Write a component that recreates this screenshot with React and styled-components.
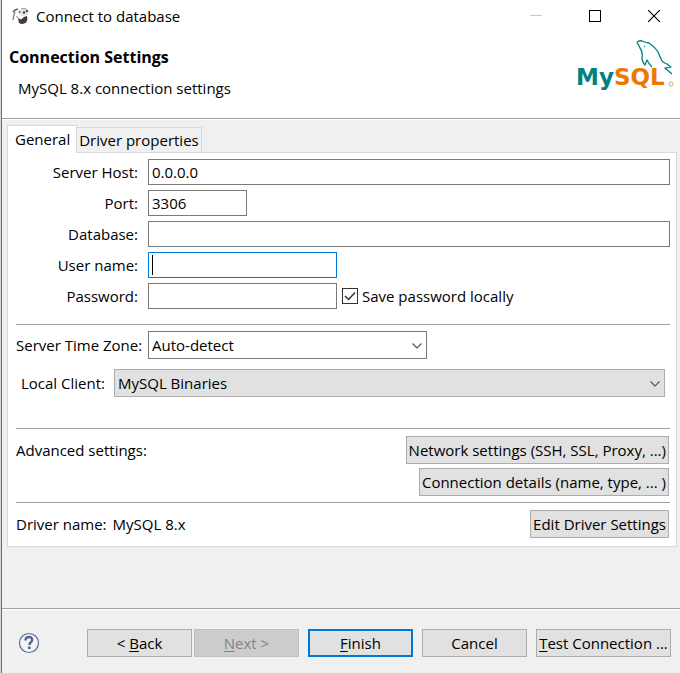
import React from "react";
import styled, { createGlobalStyle, css } from "styled-components";

const GlobalStyle = createGlobalStyle`
  *, *::before, *::after { box-sizing: border-box; }
  html, body { margin: 0; padding: 0; }
  body, button, input, select {
    font-family: "Open Sans", "Noto Sans", sans-serif;
    font-size: 15px;
    line-height: 20px;
    color: #000;
  }
`;

const Dialog = styled.main`
  display: flex;
  flex-direction: column;
  min-height: 100vh;
  background: #f0f0f0;
  border-left: 1px solid #6e6e6e;
  margin-left: 1px;
  box-shadow: -1px 0 0 #d4d6da;
`;

const Header = styled.header`
  background: #fff;
  border-bottom: 1px solid #a0a0a0;
  box-shadow: 0 1px 0 #fff;
`;

const TitleBar = styled.div`
  display: flex;
  align-items: center;
  height: 32px;
  padding-left: 10px;
`;

const TitleText = styled.span`
  flex: 1;
  padding-left: 7px;
`;

const WindowButton = styled.button`
  display: flex;
  align-items: center;
  justify-content: center;
  width: 59px;
  height: 32px;
  padding: 0;
  border: 0;
  background: none;
  color: ${(p) => (p.disabled ? "#c8c8c8" : "#000")};

  &:last-child {
    margin-right: -3px;
  }
`;

const Banner = styled.div`
  display: flex;
  justify-content: space-between;
  height: 86px;
  padding: 8px 4px 0 7px;
`;

const Headings = styled.div`
  display: flex;
  flex-direction: column;
  padding-top: 7px;
  gap: 11px;
`;

const Heading = styled.h1`
  margin: 0;
  font-size: 16px;
  line-height: 20px;
  font-weight: 700;
`;

const Subtitle = styled.p`
  margin: 0;
  padding-left: 9px;
`;

const Content = styled.div`
  flex: 1;
  padding: 6px 3px 0 5px;
`;

const Tabs = styled.div`
  display: flex;
  align-items: flex-end;
`;

const Tab = styled.button`
  z-index: 1;
  height: ${(p) => (p.$active ? 28 : 26)}px;
  margin-bottom: -1px;
  padding: ${(p) => (p.$active ? "0 6px 2px 7px" : "0 2px")};
  border: 1px solid #d9d9d9;
  border-left-width: ${(p) => (p.$active ? 1 : 0)}px;
  border-bottom-width: ${(p) => (p.$active ? 0 : 1)}px;
  background: ${(p) => (p.$active ? "#fff" : "#f0f0f0")};
`;

const Panel = styled.section`
  background: #fff;
  border: 1px solid #d9d9d9;
  padding: 6px 6px 8px 8px;
`;

const Fields = styled.div`
  display: flex;
  flex-direction: column;
  gap: 5px;
`;

const FieldRow = styled.div`
  display: flex;
  align-items: center;
`;

const FieldLabel = styled.label`
  flex: none;
  width: 122px;
  margin-right: 10px;
  text-align: right;
  white-space: nowrap;
`;

const InputBox = styled.div`
  position: relative;
  display: flex;
  ${(p) => (p.$width ? css`width: ${p.$width}px;` : css`flex: 1;`)}
`;

const TextInput = styled.input`
  width: 100%;
  height: 26px;
  padding: 0 3px;
  border: 1px solid ${(p) => (p.$focused ? "#0078d7" : "#7a7a7a")};
  border-radius: 0;
  background: #fff;
  outline: 0;
  caret-color: transparent;
`;

const Caret = styled.span`
  position: absolute;
  left: 4px;
  top: 3px;
  width: 1px;
  height: 20px;
  background: #000;
`;

const CheckLabel = styled.label`
  display: flex;
  align-items: center;
  gap: 4px;
  margin-left: 5px;
`;

const CheckBox = styled.span`
  position: relative;
  display: flex;

  input {
    appearance: none;
    width: 16px;
    height: 16px;
    margin: 0;
    border: 1px solid #333;
    background: #fff;
  }

  svg {
    position: absolute;
    inset: 0;
    visibility: hidden;
    pointer-events: none;
  }

  input:checked + svg {
    visibility: visible;
  }
`;

const Rule = styled.hr`
  margin: ${(p) => p.$top}px 0 ${(p) => p.$bottom}px;
  border: 0;
  border-top: 1px solid #a0a0a0;
`;

const SelectBox = styled.div`
  position: relative;
  ${(p) => (p.$width ? css`width: ${p.$width}px;` : css`flex: 1;`)}

  select {
    display: block;
    appearance: none;
    width: 100%;
    height: 28px;
    padding: 0 24px 0 3px;
    border: 1px solid ${(p) => (p.$flat ? "#adadad" : "#7a7a7a")};
    border-radius: 0;
    background: ${(p) => (p.$flat ? "#e1e1e1" : "#fff")};
    outline: 0;
  }

  svg {
    position: absolute;
    right: 5px;
    top: 12px;
    pointer-events: none;
  }
`;

const ClientRow = styled.div`
  display: flex;
  align-items: center;
  gap: 9px;
  margin-top: 10px;
  padding: 0 5px;
`;

const SettingsRow = styled.div`
  display: flex;
  justify-content: space-between;
  align-items: flex-start;
  padding-right: 1px;
`;

const SettingsText = styled.span`
  display: flex;
  gap: 6px;
  padding-top: 4px;
`;

const ButtonStack = styled.div`
  display: flex;
  flex-direction: column;
  align-items: flex-end;
  gap: 4px;
`;

const PushButton = styled.button`
  height: 28px;
  padding: 0 2px;
  white-space: nowrap;
  background: #e1e1e1;
  border: 1px solid #adadad;
  ${(p) => p.$width && css`width: ${p.$width}px;`}
  ${(p) => p.$primary && css`border: 2px solid #0078d7;`}

  &:disabled {
    background: #ccc;
    border-color: #bfbfbf;
    color: #838383;
  }
`;

const Mnemonic = styled.span`
  text-decoration: underline;
  text-underline-offset: 2px;
  text-decoration-thickness: 1px;
`;

const Footer = styled.footer`
  display: flex;
  align-items: center;
  justify-content: space-between;
  height: 65px;
  padding: 4px 9px 0 16px;
  border-top: 1px solid #a0a0a0;
  box-shadow: inset 0 1px 0 #fff;
`;

const HelpButton = styled.button`
  display: flex;
  padding: 0;
  border: 0;
  background: none;
`;

const Actions = styled.div`
  display: flex;
  gap: 9px;
`;

const Pager = styled.div`
  display: flex;
  gap: 2px;
`;

function BeaverIcon() {
  return (
    <svg width="17" height="18" viewBox="0 0 17 18" aria-hidden="true">
      <path d="M1 13 C1.500 10 2 7 3 5" fill="none" stroke="#8d837d" strokeWidth="1.400" />
      <path d="M1 5 Q3 2.500 6 2" fill="none" stroke="#6b6059" strokeWidth="1.600" />
      <path d="M7 3 Q10 0.500 15 2 L16 8 L13 9 Q8 10 7 6Z" fill="#e9e5e2" />
      <path d="M9 2 Q12 1 14.500 2" fill="none" stroke="#a79d96" />
      <circle cx="15" cy="4" r="1.300" fill="#5b504b" />
      <circle cx="7.500" cy="5" r="1" fill="#6b6059" />
      <circle cx="12" cy="5.500" r="1.200" fill="#4b403b" />
      <path d="M6 11 L9 12.500 L12 10 L15 9 Q16 13 14 15.500 Q11 18 7 16Z" fill="#453a36" />
      <path d="M4.500 9 L6 11" stroke="#a79d96" strokeWidth="1.200" />
    </svg>
  );
}

function MySqlLogo() {
  return (
    <svg width="100" height="54" viewBox="0 0 100 54" role="img" aria-label="MySQL">
      <text x="0" y="45" fontFamily="DejaVu Sans" fontWeight="700" fontSize="23" fill="#00807f">
        My<tspan fill="#ee7700">SQL</tspan>
      </text>
      <circle cx="95" cy="44" r="2" fill="none" stroke="#f0a050" strokeWidth="1" />
      <path
        d="M61 3 Q62 0 66 1 Q69 2.500 73 3 Q79 7 82 12 Q84 17 86 21 Q88 23 91 24 L95 27 Q92 28 89 28 L96 34 M61 3 Q63 5 64 8 Q67 12 66 17 Q66 22 69 25 Q70 22 71 20 Q73 24 76 27"
        fill="none"
        stroke="#00807f"
        strokeWidth="1.300"
        strokeLinejoin="round"
      />
      <circle cx="68.500" cy="6.500" r="0.700" fill="#00807f" />
    </svg>
  );
}

function Chevron() {
  return (
    <svg width="10" height="6" viewBox="0 0 10 6" aria-hidden="true">
      <path d="M0.500 0.500 L5 5 L9.500 0.500" fill="none" stroke="#505050" strokeWidth="1.100" />
    </svg>
  );
}

function HelpIcon() {
  return (
    <svg width="22" height="22" viewBox="0 0 22 22" aria-hidden="true">
      <circle cx="11" cy="11" r="9.500" fill="#f4f5f8" stroke="#5c6c8c" strokeWidth="1.200" />
      <path d="M7.500 8.500 C7.500 3.800 14.500 4 14.200 8 C14 10.300 11.300 10.500 11.300 13" fill="none" stroke="#52638a" strokeWidth="2.400" />
      <rect x="10" y="14.500" width="2.600" height="2.500" fill="#52638a" />
    </svg>
  );
}

function Field({ id, label, value = "", width, type = "text", focused, children }) {
  return (
    <FieldRow>
      <FieldLabel htmlFor={id}>{label}</FieldLabel>
      <InputBox $width={width}>
        <TextInput id={id} type={type} defaultValue={value} $focused={focused} />
        {focused && <Caret />}
      </InputBox>
      {children}
    </FieldRow>
  );
}

export default function App() {
  return (
    <>
      <GlobalStyle />
      <Dialog>
        <Header>
          <TitleBar>
            <BeaverIcon />
            <TitleText>Connect to database</TitleText>
            <WindowButton aria-label="Minimize" disabled>
              <svg width="12" height="12" viewBox="0 0 12 12">
                <path d="M0 5.500 H12" stroke="currentColor" />
              </svg>
            </WindowButton>
            <WindowButton aria-label="Maximize">
              <svg width="12" height="12" viewBox="0 0 12 12">
                <rect x="0.500" y="0.500" width="11" height="11" fill="none" stroke="currentColor" />
              </svg>
            </WindowButton>
            <WindowButton aria-label="Close">
              <svg width="12" height="12" viewBox="0 0 12 12">
                <path d="M0 0 L12 12 M12 0 L0 12" fill="none" stroke="currentColor" strokeWidth="1.200" />
              </svg>
            </WindowButton>
          </TitleBar>
          <Banner>
            <Headings>
              <Heading>Connection Settings</Heading>
              <Subtitle>MySQL 8.x connection settings</Subtitle>
            </Headings>
            <MySqlLogo />
          </Banner>
        </Header>

        <Content>
          <Tabs role="tablist">
            <Tab role="tab" aria-selected="true" $active>General</Tab>
            <Tab role="tab" aria-selected="false">Driver properties</Tab>
          </Tabs>
          <Panel role="tabpanel">
            <Fields>
              <Field id="host" label="Server Host:" value="0.0.0.0" />
              <Field id="port" label="Port:" value="3306" width={99} />
              <Field id="database" label="Database:" />
              <Field id="user" label="User name:" width={189} focused />
              <Field id="password" label="Password:" type="password" width={189}>
                <CheckLabel>
                  <CheckBox>
                    <input type="checkbox" defaultChecked />
                    <svg width="16" height="16" viewBox="0 0 16 16" aria-hidden="true">
                      <path d="M3 8 L6.500 11.500 L13 4.500" fill="none" stroke="#333" strokeWidth="1.500" />
                    </svg>
                  </CheckBox>
                  Save password locally
                </CheckLabel>
              </Field>
            </Fields>

            <Rule $top={15} $bottom={6} />

            <FieldRow>
              <FieldLabel htmlFor="timezone">Server Time Zone:</FieldLabel>
              <SelectBox $width={279}>
                <select id="timezone">
                  <option>Auto-detect</option>
                </select>
                <Chevron />
              </SelectBox>
            </FieldRow>
            <ClientRow>
              <label htmlFor="client">Local Client:</label>
              <SelectBox $flat>
                <select id="client">
                  <option>MySQL Binaries</option>
                </select>
                <Chevron />
              </SelectBox>
            </ClientRow>

            <Rule $top={31} $bottom={7} />

            <SettingsRow>
              <SettingsText>Advanced settings:</SettingsText>
              <ButtonStack>
                <PushButton>Network settings (SSH, SSL, Proxy, ...)</PushButton>
                <PushButton>Connection details (name, type, ... )</PushButton>
              </ButtonStack>
            </SettingsRow>

            <Rule $top={6} $bottom={7} />

            <SettingsRow>
              <SettingsText>
                <span>Driver name:</span>
                <span>MySQL 8.x</span>
              </SettingsText>
              <PushButton>Edit Driver Settings</PushButton>
            </SettingsRow>
          </Panel>
        </Content>

        <Footer>
          <HelpButton aria-label="Help">
            <HelpIcon />
          </HelpButton>
          <Actions>
            <Pager>
              <PushButton $width={105}>&lt; <Mnemonic>B</Mnemonic>ack</PushButton>
              <PushButton $width={105} disabled><Mnemonic>N</Mnemonic>ext &gt;</PushButton>
            </Pager>
            <PushButton $width={105} $primary><Mnemonic>F</Mnemonic>inish</PushButton>
            <PushButton $width={105}>Cancel</PushButton>
            <PushButton $width={135}><Mnemonic>T</Mnemonic>est Connection ...</PushButton>
          </Actions>
        </Footer>
      </Dialog>
    </>
  );
}
